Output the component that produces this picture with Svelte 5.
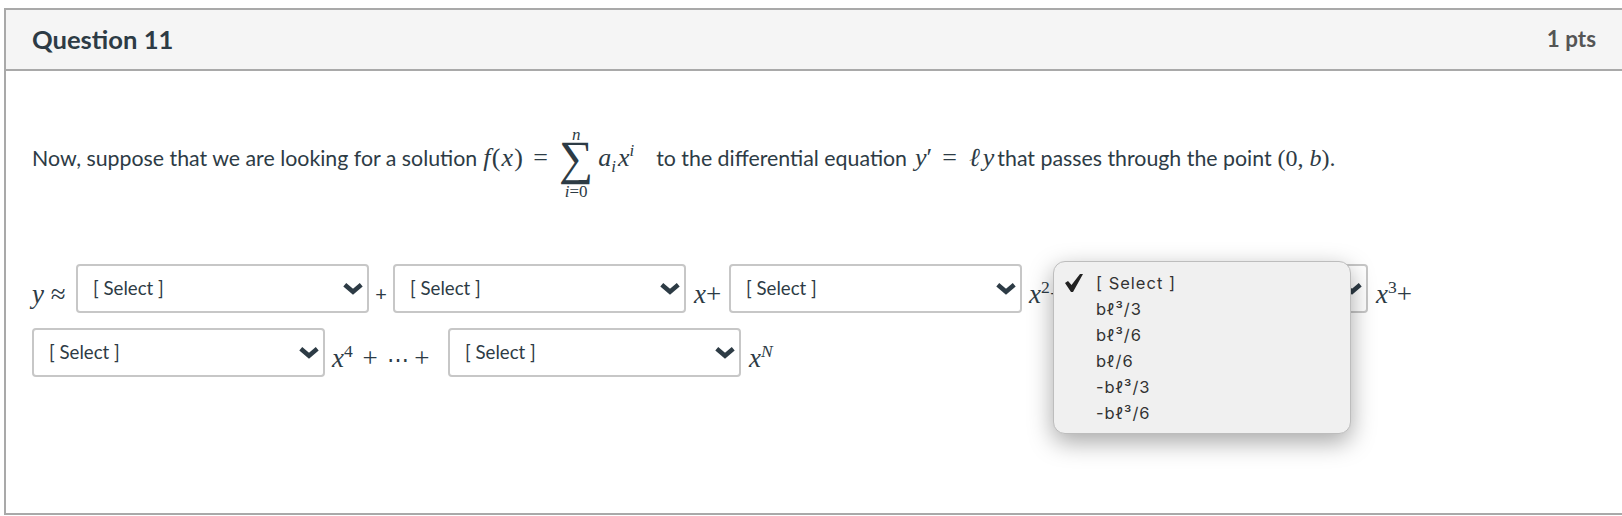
<script>
  const options = ['[ Select ]', 'bℓ³/3', 'bℓ³/6', 'bℓ/6', '-bℓ³/3', '-bℓ³/6'];
</script>

{#snippet select()}
  <span class="select">
    <span class="label">[ Select ]</span>
    <svg class="chev" viewBox="0 0 20 12" width="22" height="13" aria-hidden="true">
      <path d="M2.4 2.6 10 9 17.6 2.6" fill="none" stroke="#2d3b45" stroke-width="4.2" />
    </svg>
  </span>
{/snippet}

<div class="card">
  <header class="head">
    <h2>Question 11</h2>
    <span class="pts">1 pts</span>
  </header>
  <div class="content">
    <p class="intro">
      Now, suppose that we are looking for a solution<span class="m f"><i>f</i>(<i>x</i>)<span class="eq">=</span></span><span class="sum"><i class="lim">n</i><span class="sigma">∑</span><span class="lim"><i>i</i>=0</span></span><span class="m ai"><i>a</i><sub><i>i</i></sub><i class="xi">x</i><sup><i>i</i></sup></span><span class="gap">to the differential equation</span><span class="m yp"><i>y</i>′<span class="eq2">=</span><i class="ell">ℓ</i><i>y</i></span><span class="that">that passes through the point</span><span class="m pt">(0, <i>b</i>).</span>
    </p>
    <div class="answers">
      <div class="row">
        <span class="m w1"><i>y</i> ≈</span>
        {@render select()}
        <span class="plus">+</span>
        {@render select()}
        <span class="m w2"><i>x</i>+</span>
        {@render select()}
        <span class="m w3"><i>x</i><sup>2</sup>+</span>
        {@render select()}
        <span class="m w4"><i>x</i><sup>3</sup>+</span>
      </div>
      <div class="row">
        {@render select()}
        <span class="m w5"><i>x</i><sup>4</sup> + <span class="dots">⋯</span> +</span>
        {@render select()}
        <span class="m w4"><i>x</i><sup><i>N</i></sup></span>
      </div>
    </div>
  </div>
  <ul class="menu">
    {#each options as o, i}
      <li>
        <span class="check">
          {#if i === 0}
            <svg viewBox="0 0 18 18" width="18" height="18" aria-hidden="true">
              <polygon points="0,9 3,7 6.5,11 15,0 18,0 8,18 6,18" fill="#222" />
            </svg>
          {/if}
        </span>
        {o}
      </li>
    {/each}
  </ul>
</div>

<style>
  :global(body) {
    margin: 0;
    background: #fff;
    overflow: hidden;
  }
  .card {
    position: relative;
    box-sizing: border-box;
    margin: 8px -4px 0 4px;
    height: 507px;
    border: 2px solid #a9a9a9;
    font-family: Lato, sans-serif;
    color: #2d3b45;
  }
  .head {
    display: flex;
    justify-content: space-between;
    align-items: center;
    box-sizing: border-box;
    height: 61px;
    padding: 0 28px 2px 26px;
    background: #f5f5f5;
    border-bottom: 2px solid #a9a9a9;
  }
  h2 {
    margin: 0;
    font-size: 25.6px;
    font-weight: 700;
  }
  .pts {
    font-size: 22.4px;
    font-weight: 700;
    color: #555;
  }
  .content {
    padding: 0 26px;
  }
  .intro {
    margin: 0;
    padding-top: 51px;
    font-size: 21.33px;
    line-height: 70px;
    height: 70px;
    white-space: nowrap;
  }
  .m {
    font-family: "Liberation Serif", serif;
    font-size: 26px;
  }
  i {
    font-style: italic;
  }
  sup, sub {
    font-size: 65%;
    line-height: 0;
  }
  .f { margin-left: 6px; letter-spacing: 1.2px; }
  .eq { margin-left: 9px; }
  .sum {
    display: inline-flex;
    flex-direction: column;
    align-items: center;
    vertical-align: middle;
    margin: 4px 5px 0 10px;
    font-family: "Liberation Serif", serif;
    line-height: 1;
  }
  .lim {
    font-size: 17px;
  }
  .sigma {
    font-size: 48px;
    line-height: 30px;
    padding-bottom: 10px;
  }
  .xi { margin-left: 2px; }
  .gap { margin-left: 22px; }
  .yp { margin-left: 8px; }
  .eq2 { margin: 0 12px 0 10px; }
  .ell { margin-right: 3px; }
  .that { margin-left: 3px; }
  .pt { margin-left: 6px; font-size: 24px; }
  .answers {
    margin-top: 72px;
  }
  .row {
    display: flex;
    align-items: center;
    height: 49px;
    margin-bottom: 15px;
    white-space: nowrap;
  }
  .row .m {
    padding-top: 12px;
    box-sizing: border-box;
    font-size: 27px;
    line-height: 1;
  }
  .w1 { width: 44px; }
  .w2 { width: 43px; padding-left: 8px; }
  .w3 { width: 53px; padding-left: 7px; }
  .w4 { padding-left: 8px; }
  .w5 { width: 123px; padding-left: 7px; word-spacing: 3px; }
  .dots { margin-right: -5px; font-size: 22px; }
  .select {
    display: flex;
    flex: none;
    align-items: center;
    justify-content: space-between;
    box-sizing: border-box;
    width: 293px;
    height: 49px;
    padding: 0 3px 0 15px;
    border: 2px solid #c7c7c7;
    border-radius: 4px;
    background: #fff;
    font-size: 18.67px;
    line-height: 1;
  }
  .plus {
    width: 24px;
    padding-top: 8px;
    font-size: 20px;
    line-height: 1;
    text-align: center;
  }
  .menu {
    position: absolute;
    left: 1047px;
    top: 251px;
    box-sizing: border-box;
    width: 298px;
    height: 173px;
    margin: 0;
    padding: 8px 0;
    list-style: none;
    background: #f0f0f0;
    border: 1px solid #bdbdbd;
    border-radius: 12px;
    box-shadow: 0 8px 24px rgba(0, 0, 0, 0.35);
    font-family: Inter, sans-serif;
    font-size: 16.5px;
    letter-spacing: 1px;
    line-height: 26px;
    color: #333;
  }
  .menu li {
    display: flex;
    height: 26px;
  }
  .check {
    display: flex;
    align-items: center;
    flex: none;
    width: 42px;
    padding-left: 11px;
    box-sizing: border-box;
  }
</style>
